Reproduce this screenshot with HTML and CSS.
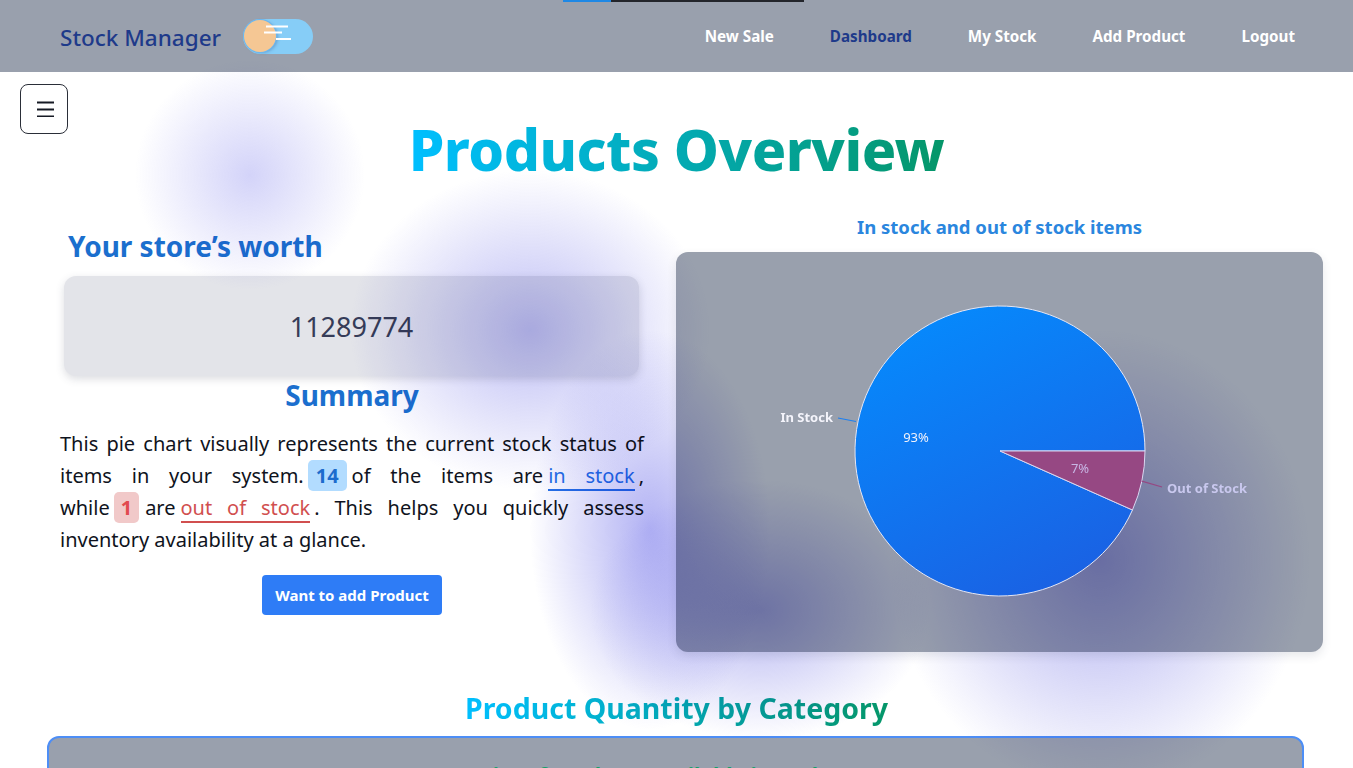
FILE: index.html
```html
<!DOCTYPE html>
<html lang="en">
<head>
<meta charset="utf-8">
<title>Stock Manager – Dashboard</title>
<link rel="stylesheet" href="styles.css">
</head>
<body>
<div class="progress"></div>
<header class="topbar">
  <div class="brand">
    <span class="brand-name">Stock Manager</span>
    <button class="theme-toggle" aria-label="Toggle theme">
      <span class="knob"></span>
      <svg class="wind" width="50" height="24" viewBox="0 0 50 24" aria-hidden="true">
        <path d="M23 7.5H45M21 13.5H39M33 20H48" />
      </svg>
    </button>
  </div>
  <nav class="nav">
    <a class="nav-link">New Sale</a>
    <a class="nav-link active">Dashboard</a>
    <a class="nav-link">My Stock</a>
    <a class="nav-link">Add Product</a>
    <a class="nav-link">Logout</a>
  </nav>
</header>

<button class="menu-btn" aria-label="Open menu">
  <svg width="20" height="18" viewBox="0 0 20 18" aria-hidden="true">
    <path d="M2 3.5H19M2 10.5H19M2 17.5H19" />
  </svg>
</button>

<main class="page">
  <h1 class="title gradient-text">Products Overview</h1>

  <section class="overview">
    <div class="left-col">
      <h2 class="section-heading worth-heading">Your store’s worth</h2>
      <div class="worth-card">11289774</div>
      <h2 class="section-heading summary-heading">Summary</h2>
      <p class="summary">This pie chart visually represents the current stock status of items in your system.<span class="badge badge-in">14</span>of the items are<span class="tag tag-in">in stock</span>, <span class="nowrap">while<span class="badge badge-out">1</span>are</span><span class="tag tag-out">out of stock</span>. This helps you quickly assess inventory availability at a glance.</p>
      <div class="btn-row"><button class="btn-primary">Want to add Product</button></div>
    </div>

    <div class="right-col">
      <h3 class="chart-title">In stock and out of stock items</h3>
      <div class="chart-card">
        <svg class="pie" viewBox="0 0 647 400" width="647" height="400">
          <defs>
            <linearGradient id="inGrad" x1="0.3" y1="0" x2="0.8" y2="1">
              <stop offset="0" stop-color="#0689fc"/>
              <stop offset="1" stop-color="#1b5fe2"/>
            </linearGradient>
          </defs>
          <path d="M324 199 L456.46 257.98 A145 145 0 1 1 469 199 Z" fill="url(#inGrad)" stroke="#e4e6f4" stroke-width="1"/>
          <path d="M324 199 L469 199 A145 145 0 0 1 456.46 257.98 Z" fill="#964883" stroke="#d9d6f0" stroke-width="1"/>
          <path d="M180 169.5 L162 166" stroke="#1d7ff0" stroke-width="1.2" fill="none"/>
          <path d="M465.8 229.1 L486 235" stroke="#964883" stroke-width="1.2" fill="none"/>
          <text class="pie-label" x="157" y="170" text-anchor="end">In Stock</text>
          <text class="pie-label pie-label-out" x="491" y="241">Out of Stock</text>
          <text class="pie-pct" x="240" y="190" text-anchor="middle">93%</text>
          <text class="pie-pct pie-pct-out" x="404" y="221" text-anchor="middle">7%</text>
        </svg>
      </div>
    </div>
  </section>

  <h2 class="category-title gradient-text">Product Quantity by Category</h2>
  <div class="category-card">
    <h3 class="category-sub">Quantity of products available in each category</h3>
  </div>
</main>

<div class="blobs" aria-hidden="true"></div>
</body>
</html>
```

FILE: styles.css
```css
* { box-sizing: border-box; }

html { overflow: hidden; }

body {
  margin: 0;
  font-family: "Noto Sans", "Open Sans", sans-serif;
  color: #111827;
  background: #ffffff;
}

/* thin loading indicator at the very top */
.progress {
  position: absolute;
  top: 0;
  left: 563px;
  width: 241px;
  height: 2px;
  background: linear-gradient(90deg, #1e88e5 0 48px, #23252b 48px);
  z-index: 5;
}

/* ---------- header ---------- */
.topbar {
  height: 72px;
  background: #99a0ad;
  display: flex;
  align-items: center;
  justify-content: space-between;
  padding: 0 58px 0 60px;
}

.brand {
  display: flex;
  align-items: center;
  gap: 22px;
}

.brand-name {
  font-size: 22.5px;
  font-weight: 500;
  color: #1e3a8a;
  padding-top: 3px;
}

.theme-toggle {
  position: relative;
  width: 70px;
  height: 35px;
  border: none;
  border-radius: 18px;
  background: #86cdf7;
  padding: 0;
  margin-top: 1px;
}

.knob {
  position: absolute;
  left: 1px;
  top: 1px;
  width: 32px;
  height: 32px;
  border-radius: 50%;
  background: #f5c794;
  box-shadow: 0 0 0 1px #6cb7ef, 2px 1px 3px rgba(60, 90, 140, 0.35);
}

.wind {
  position: absolute;
  left: 0;
  top: 0;
}

.wind path {
  stroke: #ffffff;
  stroke-width: 2;
  fill: none;
}

.nav {
  display: flex;
  gap: 56px;
}

.nav-link {
  font-size: 15.2px;
  font-weight: 700;
  color: #ffffff;
  text-decoration: none;
}

.nav-link.active { color: #1e3a8a; }

/* ---------- floating menu toggle ---------- */
.menu-btn {
  position: absolute;
  top: 84px;
  left: 20px;
  width: 48px;
  height: 50px;
  border: 1.3px solid #2a2e38;
  border-radius: 8px;
  background: #ffffff;
  padding: 0;
  display: flex;
  align-items: center;
  justify-content: center;
}

.menu-btn svg path {
  stroke: #161a24;
  stroke-width: 2.2;
  fill: none;
}

.menu-btn svg { margin-top: -3px; margin-left: 1px; }

/* ---------- page ---------- */
.gradient-text {
  background: linear-gradient(90deg, #00bfff, #059669);
  -webkit-background-clip: text;
  background-clip: text;
  color: transparent;
}

.title {
  margin: 42px auto 0;
  width: max-content;
  font-size: 57px;
  line-height: 70px;
  font-weight: 800;
  letter-spacing: -0.5px;
}

.overview {
  display: grid;
  grid-template-columns: 624px 1fr;
  column-gap: 12px;
  padding: 0 30px 0 40px;
}

.left-col {
  display: flex;
  flex-direction: column;
}

.section-heading {
  margin: 0;
  font-size: 28px;
  line-height: 36px;
  font-weight: 700;
  color: #1b6fce;
}

.worth-heading {
  margin: 44px 0 0 28px;
}

.worth-card {
  margin: 12px 25px 0 24px;
  height: 100px;
  border-radius: 12px;
  background: #e3e4e9;
  box-shadow: 0 3px 8px rgba(60, 64, 90, 0.18);
  display: flex;
  align-items: center;
  justify-content: center;
  font-size: 27px;
  color: #363c58;
}

.summary-heading {
  text-align: center;
  margin-top: 1px;
}

.summary {
  margin: 15px 20px 0 20px;
  font-size: 20px;
  line-height: 32px;
  text-align: justify;
  color: #0f1320;
}

.nowrap { white-space: nowrap; }

.badge {
  display: inline-block;
  line-height: 31px;
  border-radius: 5px;
  font-weight: 700;
  padding: 0 8px;
  margin: 0 5px 0 4px;
}

.badge-in {
  background: #b2dcff;
  color: #1c6ccd;
}

.badge-out {
  background: #f1c9c9;
  color: #e14a4f;
  padding: 0 7px;
  margin: 0 6px 0 4px;
}

.tag {
  border-bottom: 2px solid currentColor;
  margin: 0 4px 0 5px;
}

.tag-in {
  color: #2672e6;
}

.tag-out {
  color: #d14f4f;
}

.btn-row {
  display: flex;
  justify-content: center;
  margin-top: 19px;
}

.btn-primary {
  height: 40px;
  padding: 0 13px;
  border: none;
  border-radius: 4px;
  background: #2e7cf6;
  color: #ffffff;
  font-family: inherit;
  font-size: 15px;
  font-weight: 700;
}

/* ---------- chart ---------- */
.right-col {
  display: flex;
  flex-direction: column;
}

.chart-title {
  margin: 30px 0 0;
  text-align: center;
  font-size: 18.5px;
  line-height: 26px;
  font-weight: 700;
  color: #2a86de;
}

.chart-card {
  margin-top: 12px;
  height: 400px;
  border-radius: 12px;
  background: #99a0ad;
  box-shadow: 0 4px 10px rgba(60, 64, 90, 0.12);
  overflow: hidden;
}

/* pie sits above the glow layer */
.pie {
  position: relative;
  z-index: 1;
  display: block;
  width: 100%;
  height: 100%;
}

.pie-label {
  font-family: "Noto Sans", sans-serif;
  font-size: 13px;
  font-weight: 700;
  fill: #f4f4fb;
}

.pie-label-out { fill: #c9c8ee; }

.pie-pct {
  font-family: "Noto Sans", sans-serif;
  font-size: 13px;
  fill: #f2f2fa;
}

.pie-pct-out { fill: #c7b6e4; }

/* ---------- category ---------- */
.category-title {
  margin: 38px auto 0;
  width: max-content;
  font-size: 28.5px;
  line-height: 36px;
  font-weight: 700;
}

.category-card {
  margin: 10px 49px 0 47px;
  height: 200px;
  border: 2px solid #4d8ef6;
  border-radius: 12px;
  background: #99a0ad;
  padding-top: 23px;
}

.category-sub {
  margin: 0;
  text-align: center;
  font-size: 21px;
  font-weight: 700;
  color: #17a06a;
}

/* ---------- soft glowing blobs ---------- */
.blobs {
  position: fixed;
  inset: 0;
  pointer-events: none;
  mix-blend-mode: multiply;
  z-index: 0;
  background:
    radial-gradient(ellipse 115px 115px at 250px 175px, rgba(110, 110, 235, 0.30), rgba(110, 110, 235, 0)),
    radial-gradient(ellipse 180px 160px at 530px 330px, rgba(100, 100, 230, 0.42), rgba(100, 100, 230, 0)),
    radial-gradient(ellipse 120px 200px at 650px 530px, rgba(100, 100, 232, 0.50), rgba(100, 100, 232, 0)),
    radial-gradient(ellipse 170px 130px at 760px 610px, rgba(95, 95, 225, 0.45), rgba(95, 95, 225, 0)),
    radial-gradient(ellipse 210px 230px at 1100px 560px, rgba(95, 95, 225, 0.50), rgba(95, 95, 225, 0));
}
```
